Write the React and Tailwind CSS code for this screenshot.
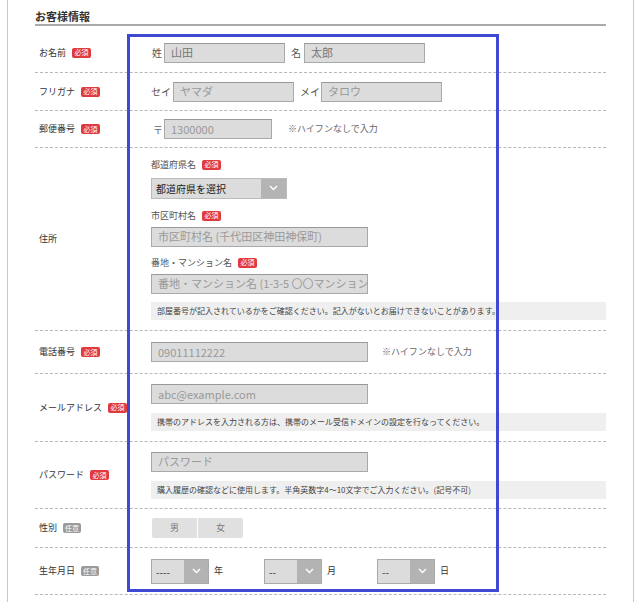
const Chevron = () => (
  <svg width="9" height="6" viewBox="0 0 9 6" fill="none">
    <path d="M1 1l3.5 3.5L8 1" stroke="#fff" strokeWidth="1.4" />
  </svg>
);

const Badge = ({ optional }) => (
  <span
    className={
      optional
        ? "inline-flex items-center justify-center w-[18px] h-[10px] rounded-[2px] bg-[#9b9b9b] text-white text-[7px] leading-none"
        : "inline-flex items-center justify-center w-[19px] h-[10px] rounded-[2px] bg-[#e03a3e] text-white text-[7px] leading-none"
    }
  >
    {optional ? "任意" : "必須"}
  </span>
);

const Field = ({ className, text, dark }) => (
  <div
    className={`h-[20px] bg-[#dcdcdc] border border-[#a9a9a9] border-t-[#999] pl-[6px] flex items-center text-[11px] leading-none whitespace-nowrap overflow-hidden ${
      dark ? "text-[#777]" : "text-[#999]"
    } ${className}`}
  >
    {text}
  </div>
);

const Note = ({ children }) => (
  <div className="h-[18px] bg-[#efefef] pl-[6px] flex items-center text-[8px] text-[#444] whitespace-nowrap">
    {children}
  </div>
);

const Row = ({ className, label, optional, children }) => (
  <div className={`flex border-b border-dashed border-[#b8b8b8] ${className}`}>
    <div className="w-[116px] shrink-0 pl-[4px] flex items-center gap-[6px] text-[9px] text-[#333]">
      <span>{label}</span>
      {label !== "住所" && <Badge optional={optional} />}
    </div>
    <div className="flex-1 flex flex-col justify-center">{children}</div>
  </div>
);

const SmallSelect = ({ value, unit }) => (
  <div className="w-[113px] flex items-center gap-[5px]">
    <div className="w-[58px] h-[25px] flex border border-[#aaa] bg-[#dcdcdc]">
      <span className="flex-1 pl-[4px] flex items-center text-[10px] text-[#333]">{value}</span>
      <span className="w-[24px] bg-[#b3b3b3] flex items-center justify-center">
        <Chevron />
      </span>
    </div>
    <span className="text-[9px] text-[#333]">{unit}</span>
  </div>
);

export default function App() {
  return (
    <div className="w-[640px] h-[602px] bg-white relative overflow-hidden font-['Noto_Sans_CJK_JP',sans-serif]">
      <div className="ml-[7px] w-[627px] h-full border-x border-[#c8c8c8] px-[27px] pt-[9px]">
        <h2 className="text-[11px] font-bold text-[#333] leading-[14px] pb-[1px] border-b-2 border-[#aaa]">
          お客様情報
        </h2>

        <Row className="h-[47px] pt-[7px]" label="お名前">
          <div className="flex items-center text-[10px] text-[#555]">
            <span className="w-[13px] pl-[1px]">姓</span>
            <Field className="w-[121px]" text="山田" dark />
            <span className="ml-[6px] w-[13px]">名</span>
            <Field className="w-[121px]" text="太郎" dark />
          </div>
        </Row>

        <Row className="h-[38px]" label="フリガナ">
          <div className="flex items-center text-[10px] text-[#555]">
            <span className="w-[22px]">セイ</span>
            <Field className="w-[121px]" text="ヤマダ" />
            <span className="ml-[6px] w-[21px]">メイ</span>
            <Field className="w-[121px]" text="タロウ" />
          </div>
        </Row>

        <Row className="h-[37px]" label="郵便番号">
          <div className="flex items-center text-[10px] text-[#666]">
            <span className="w-[13px] pl-[2px]">〒</span>
            <Field className="w-[108px]" text="1300000" />
            <span className="ml-[16px] text-[9px]">※ハイフンなしで入力</span>
          </div>
        </Row>

        <Row className="h-[183px]" label="住所">
          <div className="flex flex-col">
            <div className="flex items-center gap-[6px] text-[9px] text-[#555] h-[12px]">
              都道府県名 <Badge />
            </div>
            <div className="mt-[7px] w-[136px] h-[21px] flex border border-[#bbb] bg-[#dcdcdc]">
              <span className="flex-1 pl-[4px] flex items-center text-[10px] text-[#222]">都道府県を選択</span>
              <span className="w-[25px] bg-[#b4b4b4] flex items-center justify-center">
                <Chevron />
              </span>
            </div>
            <div className="mt-[11px] flex items-center gap-[6px] text-[9px] text-[#555] h-[12px]">
              市区町村名 <Badge />
            </div>
            <Field className="mt-[5px] w-[217px]" text="市区町村名 (千代田区神田神保町)" />
            <div className="mt-[10px] flex items-center gap-[6px] text-[9px] text-[#555] h-[12px]">
              番地・マンション名 <Badge />
            </div>
            <Field className="mt-[5px] w-[217px]" text="番地・マンション名 (1-3-5 〇〇マンション" />
            <div className="mt-[8px]">
              <Note>部屋番号が記入されているかをご確認ください。記入がないとお届けできないことがあります。</Note>
            </div>
          </div>
        </Row>

        <Row className="h-[43px]" label="電話番号">
          <div className="flex items-center">
            <Field className="w-[217px]" text="09011112222" />
            <span className="ml-[14px] text-[9px] text-[#666]">※ハイフンなしで入力</span>
          </div>
        </Row>

        <Row className="h-[68px]" label="メールアドレス">
          <Field className="w-[217px]" text="abc@example.com" />
          <div className="mt-[9px]">
            <Note>携帯のアドレスを入力される方は、携帯のメール受信ドメインの設定を行なってください。</Note>
          </div>
        </Row>

        <Row className="h-[67px]" label="パスワード">
          <Field className="w-[217px]" text="パスワード" />
          <div className="mt-[9px]">
            <Note>購入履歴の確認などに使用します。半角英数字4～10文字でご入力ください。(記号不可)</Note>
          </div>
        </Row>

        <Row className="h-[39px]" label="性別" optional>
          <div className="ml-[1px] flex w-[91px] h-[20px] rounded-[2px] overflow-hidden text-[9px] text-[#777]">
            <span className="flex-1 bg-[#e0e0e0] flex items-center justify-center border-r border-white">男</span>
            <span className="flex-1 bg-[#e0e0e0] flex items-center justify-center">女</span>
          </div>
        </Row>

        <Row className="h-[47px]" label="生年月日" optional>
          <div className="flex items-center">
            <SmallSelect value="----" unit="年" />
            <SmallSelect value="--" unit="月" />
            <SmallSelect value="--" unit="日" />
          </div>
        </Row>
      </div>

      <div className="absolute left-[127px] top-[34px] w-[372px] h-[558px] border-[3px] border-[#4049d4]" />
    </div>
  );
}
